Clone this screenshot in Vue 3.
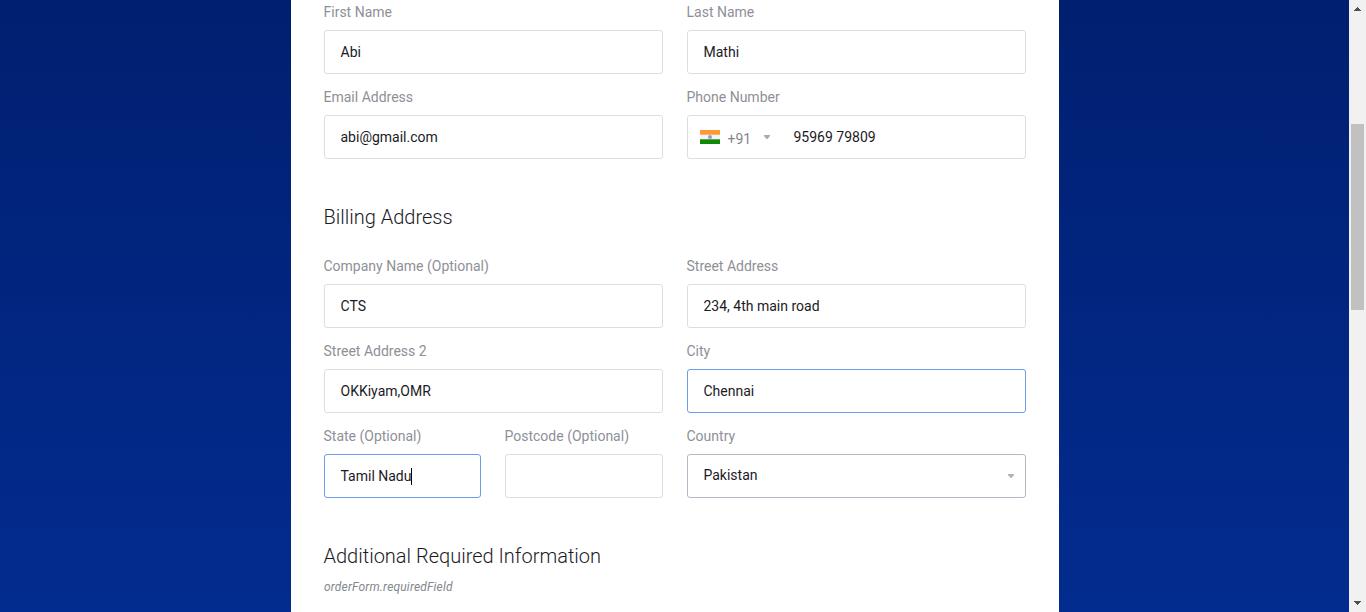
<script setup>
const contact = [
  { label: 'First Name', value: 'Abi' },
  { label: 'Last Name', value: 'Mathi' },
  { label: 'Email Address', value: 'abi@gmail.com' },
  { label: 'Phone Number', value: '95969 79809', kind: 'phone' },
]
const billing = [
  { label: 'Company Name (Optional)', value: 'CTS', span: 'wide' },
  { label: 'Street Address', value: '234, 4th main road', span: 'wide' },
  { label: 'Street Address 2', value: 'OKKiyam,OMR', span: 'wide' },
  { label: 'City', value: 'Chennai', span: 'wide', state: 'hovered' },
  { label: 'State (Optional)', value: 'Tamil Nadu', state: 'focused' },
  { label: 'Postcode (Optional)', value: '' },
  { label: 'Country', value: 'Pakistan', span: 'wide', kind: 'select' },
]
</script>

<template>
  <div class="page">
    <main class="backdrop">
      <div class="card">
        <section class="grid halves">
          <div v-for="f in contact" :key="f.label" class="field">
            <div class="label">{{ f.label }}</div>
            <div class="box" :class="f.kind">
              <template v-if="f.kind === 'phone'">
                <svg class="flag" width="20" height="14" viewBox="0 0 20 14">
                  <rect width="20" height="14" fill="#f4f4f4" />
                  <rect width="20" height="4.7" fill="#ff9933" />
                  <rect y="9.3" width="20" height="4.7" fill="#128807" />
                  <circle cx="10" cy="7" r="2" fill="#9a9ad2" />
                </svg>
                <span class="code">+91</span>
                <svg class="arrow" width="6" height="4" viewBox="0 0 6 4"><path d="M0 0h6v1L3.5 4h-1L0 1z" fill="#a9abb2" /></svg>
              </template>
              <span class="value">{{ f.value }}</span>
            </div>
          </div>
        </section>

        <h2 class="billing-title">Billing Address</h2>
        <section class="grid quarters">
          <div v-for="f in billing" :key="f.label" class="field" :class="f.span">
            <div class="label">{{ f.label }}</div>
            <div class="box" :class="[f.kind, f.state]">
              <span class="value">{{ f.value }}</span>
              <i v-if="f.state === 'focused'" class="caret"></i>
              <svg v-if="f.kind === 'select'" class="arrow end" width="6" height="4" viewBox="0 0 6 4"><path d="M0 0h6v1L3.5 4h-1L0 1z" fill="#afb3be" /></svg>
            </div>
          </div>
        </section>

        <h2 class="extra-title">Additional Required Information</h2>
        <p class="hint">orderForm.requiredField</p>
      </div>
    </main>
    <aside class="scrollbar">
      <svg width="7" height="4" viewBox="0 0 7 4" shape-rendering="crispEdges"><path d="M3 0h1v1h1v1h1v1h1v1H0V3h1V2h1V1h1z" fill="#505050" /></svg>
      <div class="thumb"></div>
      <svg width="7" height="4" viewBox="0 0 7 4" shape-rendering="crispEdges"><path d="M0 0h7v1H6v1H5v1H4v1H3V3H2V2H1V1H0z" fill="#505050" /></svg>
    </aside>
  </div>
</template>

<style>
html, body { margin: 0; overflow: hidden; }
</style>

<style scoped>
.page {
  display: flex;
  height: 612px;
  overflow: hidden;
  font-family: Roboto, "Liberation Sans", sans-serif;
  font-size: 14px;
  color: #1b1b1f;
}
.backdrop {
  flex: 1;
  display: flex;
  padding-left: 291px;
  background: linear-gradient(180deg, #001f70, #032c90);
}
.card {
  box-sizing: border-box;
  width: 768px;
  height: 612px;
  padding: 2px 33px 0;
  background: #fff;
}
.grid {
  display: grid;
  column-gap: 24px;
  row-gap: 13px;
}
.halves { grid-template-columns: 339px 339px; }
.quarters { grid-template-columns: 157px 158px 339px; }
.quarters .wide:nth-child(odd):not(:last-child) { grid-column: 1 / 3; }
.label {
  height: 20px;
  margin: 0 0 8px -0.5px;
  line-height: 20px;
  color: #8e9097;
  white-space: nowrap;
}
.box {
  box-sizing: border-box;
  display: flex;
  align-items: center;
  height: 44px;
  padding: 0 12px 0 15.5px;
  border: 1px solid #dddee0;
  border-radius: 3px;
  line-height: 20px;
}
.hovered, .focused { border-color: #6f9bea; }
.select { border-color: #b5b9c6; }
.select .value { margin-top: -2px; }
.caret { width: 1px; height: 17px; margin-left: -0.5px; background: #000; }
.arrow.end { margin: -1px -1px 0 auto; }
.phone { padding-left: 12px; }
.flag { margin-top: 0; }
.code { margin: 2px 0 0 7.5px; width: 36.5px; line-height: 20px; color: #85868a; position: relative; top: 0.5px; }
.phone .arrow { margin-top: -1px; }
.phone .value { margin-left: 23.5px; }
h2 {
  margin: 0 0 0 -0.5px;
  font-size: 20px;
  font-weight: 300;
  line-height: 28px;
}
.billing-title { margin: 44px 0 25px -0.5px; }
.extra-title { margin-top: 44px; }
.hint {
  margin: 8px 0 0;
  font-size: 12px;
  letter-spacing: 0.18px;
  font-style: italic;
  line-height: 18px;
  color: #85878e;
}
.scrollbar {
  box-sizing: border-box;
  display: flex;
  flex-direction: column;
  align-items: center;
  width: 17px;
  padding: 7px 0;
  background: #f1f1f1;
}
.thumb {
  width: 13px;
  height: 186px;
  margin: 113px 0 auto;
  background: #c1c1c1;
}
</style>
